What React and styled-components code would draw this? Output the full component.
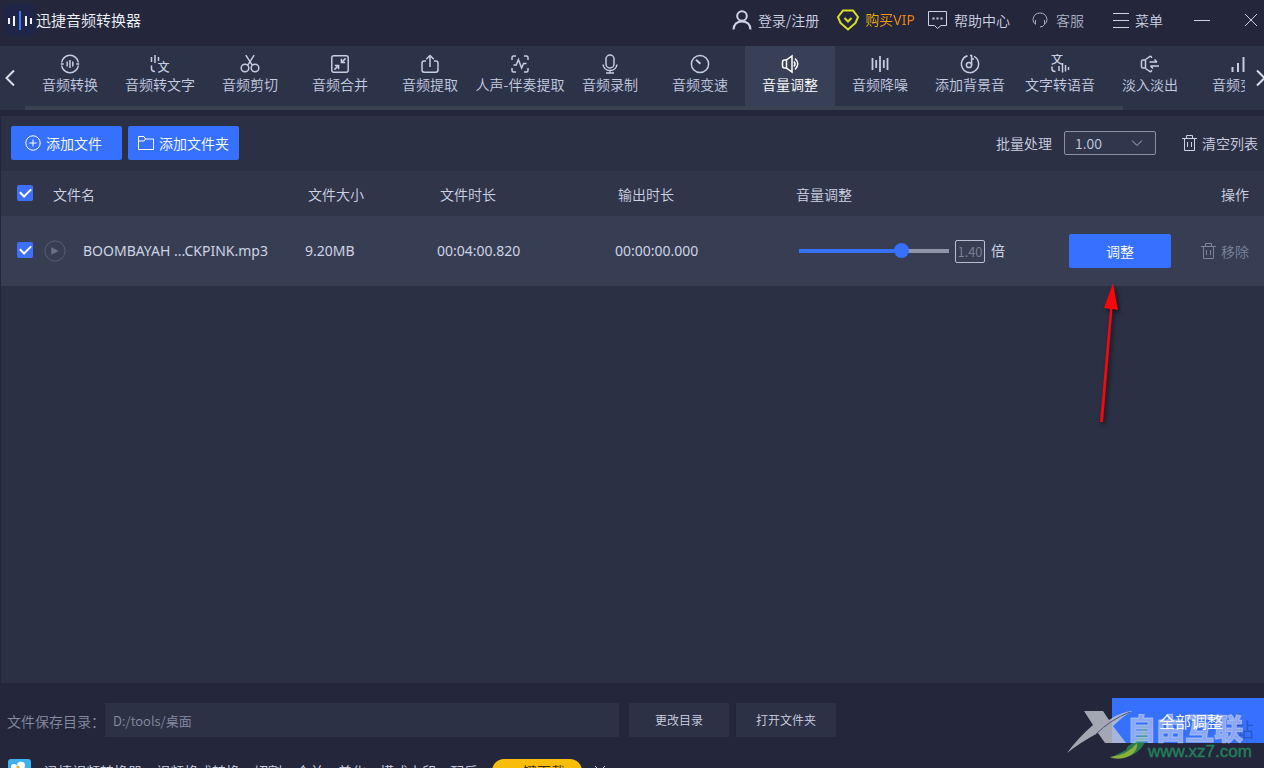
import React, { useState } from "react";
import styled, { createGlobalStyle } from "styled-components";

const tabs = [
  { name: "音频转换", icon: "convert" },
  { name: "音频转文字", icon: "toText" },
  { name: "音频剪切", icon: "cut" },
  { name: "音频合并", icon: "merge" },
  { name: "音频提取", icon: "extract" },
  { name: "人声-伴奏提取", icon: "vocal" },
  { name: "音频录制", icon: "record" },
  { name: "音频变速", icon: "speed" },
  { name: "音量调整", icon: "volume" },
  { name: "音频降噪", icon: "denoise" },
  { name: "添加背景音", icon: "music" },
  { name: "文字转语音", icon: "toSpeech" },
  { name: "淡入淡出", icon: "fade" },
  { name: "音频变声", icon: "signal" },
];

const files = [
  {
    name: "BOOMBAYAH ...CKPINK.mp3",
    size: "9.20MB",
    duration: "00:04:00.820",
    output: "00:00:00.000",
    volume: 1.4,
  },
];

const tabIcons = {
  convert: (
    <>
      <path d="M1.6 8.5A8.5 8.5 0 0 1 18.4 8.5M18.4 11.5A8.5 8.5 0 0 1 1.6 11.5" />
      <path d="M.8 10h3M16.2 10h3M7.2 7.5v5M10 6v8M12.8 7.5v5" />
    </>
  ),
  toText: (
    <>
      <path d="M1.5 3v5M5 1v8M8.5 3v4M1.5 11.5v3q0 3 3.5 3" />
      <text x="7.5" y="17.6">文</text>
    </>
  ),
  cut: (
    <>
      <circle cx="5" cy="14" r="3.8" />
      <circle cx="15" cy="14" r="3.8" />
      <path d="M5.8 1.2L12.4 11.4M14.2 1.2L7.6 11.4" />
    </>
  ),
  merge: (
    <>
      <rect x="1.8" y="1.8" width="16.4" height="16.4" rx="2" />
      <path d="M15.6 4.4L11.6 8.4M11.4 4.8v3.8h3.8M4.4 15.6L8.4 11.6M8.6 15.2v-3.8H4.8" />
    </>
  ),
  extract: (
    <>
      <path d="M6 7H4.2Q2 7 2 9.2V16q0 2.2 2.2 2.2h11.6Q18 18.2 18 16V9.2Q18 7 15.8 7H14" />
      <path d="M10 13V1.8M6.2 5.2L10 1.5L13.8 5.2" />
    </>
  ),
  vocal: (
    <>
      <path d="M2 6V3.5Q2 2 3.5 2H6M14 2h2.5Q18 2 18 3.5V6M18 14v2.5q0 1.5-1.5 1.5H14M6 18H3.5Q2 18 2 16.5V14" />
      <path d="M3.5 11H6.2L8.4 5.5L11.6 14L13.6 9.5H16.5" />
    </>
  ),
  record: (
    <>
      <rect x="6" y="1" width="8" height="13" rx="4" />
      <path d="M3 10.5q1 6 7 6t7-6M10 16.5V19M6 19h8" />
    </>
  ),
  speed: (
    <>
      <circle cx="10" cy="10" r="8.6" />
      <path d="M6 5.8L10.4 9.8" strokeWidth="2" />
    </>
  ),
  volume: (
    <>
      <path d="M6.5 6H4.5Q2.5 6 2.5 8v4q0 2 2 2h2M6.5 5.8V14.2L12 18V2L6.5 5.8Z" />
      <path d="M14 7.5q2 2.5 0 5M15 4.5q5.5 5.5 0 11" />
    </>
  ),
  denoise: (
    <path d="M2.5 4v12M6.2 6v8M10 2v16M13.8 6v8M17.5 4v12" strokeWidth="1.8" />
  ),
  music: (
    <>
      <path d="M7.5 1.8A8.6 8.6 0 1 0 14 2.4" />
      <circle cx="9" cy="11" r="2.6" />
      <path d="M11.6 11V1.5H10M11.6 5H14" />
    </>
  ),
  toSpeech: (
    <>
      <text x="1" y="10.4">文</text>
      <path d="M2 12.5V15q0 2.5 3.5 2.5M9 12v5M12.5 9v9.5M15.5 11v6.5M18.5 13v3" />
    </>
  ),
  fade: (
    <>
      <path d="M5.5 6H3Q1.5 6 1.5 7.5v5Q1.5 14 3 14h2.5M5.5 5.5v9M5.5 5.5L10 2.4Q11.5 1.8 11.5 4M5.5 14.5L10 17.6Q11.5 18.2 11.5 16" />
      <path d="M9.5 8H17M14.5 5.5L17 8M19 12H10.5M13 14.5L10.5 12" />
    </>
  ),
  signal: <path d="M2.5 13v5M8 9v9M13.5 3v15" strokeWidth="2" />,
};

function TrashIcon() {
  return (
    <LineIcon width="15" height="16" viewBox="0 0 15 16">
      <path d="M0 3.5h15M4.5 3.5V.5h6v3M2.5 3.5v12h10v-12M5.5 7v5M9.5 7v5" />
    </LineIcon>
  );
}

function Header() {
  return (
    <TitleBar>
      <Brand>
        <svg width="32" height="32" viewBox="0 0 32 32">
          <rect width="32" height="32" rx="6" fill="#1e2547" />
          <path
            d="M5 14v6M10 12v10M22 12v10M27 14v6"
            stroke="#f2f4fb"
            strokeWidth="2"
          />
          <path d="M16 7v19" stroke="#3f74f2" strokeWidth="2" />
        </svg>
        <AppName>迅捷音频转换器</AppName>
      </Brand>
      <HeaderButton>
        <LineIcon width="20" height="20" viewBox="0 0 20 20" $weight={2}>
          <circle cx="10" cy="6" r="4.8" />
          <path d="M1.5 19.5Q2 11.5 10 11.5T18.5 19.5" />
        </LineIcon>
        登录/注册
      </HeaderButton>
      <HeaderButton $before={18} $tone="vip">
        <LineIcon width="22" height="22" viewBox="0 0 22 22" $weight={2}>
          <path d="M6 1.5H16L21 8L18.5 14L11 20.5L3.5 14L1 8Z" />
          <path d="M7.5 9L11 12.5L14.5 9" />
        </LineIcon>
        <VipText>购买VIP</VipText>
      </HeaderButton>
      <HeaderButton $before={13}>
        <LineIcon width="20" height="20" viewBox="0 0 20 20">
          <path d="M.5 1.5h18v14h-5.5L9.5 18.5L6.5 15.5h-6Z" />
          <path d="M4.5 8.5h2M8.5 8.5h2M12.5 8.5h2" strokeWidth="2" />
        </LineIcon>
        帮助中心
      </HeaderButton>
      <HeaderButton $before={22} $tone="dim">
        <LineIcon width="16" height="18" viewBox="0 0 16 18">
          <path d="M3 12.5Q1 12 1 8.5Q2 2 8 2t7 6.5q0 3.5-2 4M3.5 9v4.5M12.5 9v4.5Q11.5 16 8 16" />
        </LineIcon>
        客服
      </HeaderButton>
      <HeaderButton $before={29}>
        <LineIcon width="16" height="16" viewBox="0 0 16 16">
          <path d="M0 1.5h16M0 8.5h16M0 15.5h16" />
        </LineIcon>
        菜单
      </HeaderButton>
      <HeaderButton $before={31} aria-label="最小化">
        <LineIcon width="16" height="16" viewBox="0 0 16 16">
          <path d="M0 8.5h16" />
        </LineIcon>
      </HeaderButton>
      <HeaderButton $before={34} aria-label="关闭">
        <LineIcon width="14" height="14" viewBox="0 0 14 14">
          <path d="M1 1L13 13M13 1L1 13" />
        </LineIcon>
      </HeaderButton>
    </TitleBar>
  );
}

function Tabs() {
  const [active, setActive] = useState("音量调整");

  return (
    <TabBar>
      <Arrow aria-label="向左">
        <svg width="10" height="18" viewBox="0 0 10 18">
          <path d="M9 1.5L1.5 9L9 16.5" />
        </svg>
      </Arrow>
      <TabViewport>
        <TabList>
          {tabs.map((tab) => (
            <Tab
              key={tab.name}
              $active={tab.name === active}
              onClick={() => setActive(tab.name)}
            >
              <TabIcon viewBox="0 0 20 20">{tabIcons[tab.icon]}</TabIcon>
              {tab.name}
            </Tab>
          ))}
        </TabList>
        <ScrollThumb />
      </TabViewport>
      <Arrow $end aria-label="向右">
        <svg width="8" height="18" viewBox="0 0 8 18">
          <path d="M1 1.5L8.5 9L1 16.5" />
        </svg>
      </Arrow>
    </TabBar>
  );
}

function Toolbar() {
  return (
    <Tools>
      <PrimaryButton $start={14}>
        <LineIcon width="16" height="16" viewBox="0 0 16 16">
          <circle cx="8" cy="8" r="7.2" />
          <path d="M8 4.5v7M4.5 8h7" />
        </LineIcon>
        添加文件
      </PrimaryButton>
      <PrimaryButton $start={10}>
        <LineIcon width="16" height="16" viewBox="0 0 16 16">
          <path d="M.5 14.5v-13h5.5l1.5 2.5h8v10.5ZM.5 6h5.5l1.5-2" />
        </LineIcon>
        添加文件夹
      </PrimaryButton>
      <Batch>
        <label htmlFor="batch">批量处理</label>
        <SelectBox>
          <Select id="batch" defaultValue="1.00">
            <option>0.50</option>
            <option>1.00</option>
            <option>1.50</option>
            <option>2.00</option>
          </Select>
          <Chevron width="12" height="8" viewBox="0 0 12 8">
            <path d="M1 1.5L6 6.5L11 1.5" />
          </Chevron>
        </SelectBox>
      </Batch>
      <TextButton>
        <TrashIcon />
        清空列表
      </TextButton>
    </Tools>
  );
}

function FileRow({ file }) {
  const [volume, setVolume] = useState(file.volume);

  return (
    <Row>
      <CheckCell>
        <Checkbox defaultChecked aria-label={file.name} />
      </CheckCell>
      <Cell>
        <Line $gap={17}>
          <PlayButton aria-label="播放">
            <svg width="24" height="24" viewBox="0 0 24 24">
              <circle cx="12" cy="12" r="11" fill="none" stroke="#596177" />
              <path d="M8 8v8l8-4Z" fill="#697187" />
            </svg>
          </PlayButton>
          {file.name}
        </Line>
      </Cell>
      <Cell>{file.size}</Cell>
      <Cell>{file.duration}</Cell>
      <Cell>{file.output}</Cell>
      <Cell>
        <Line $gap={6} $start={6}>
          <Slider
            aria-label="音量调整"
            min="0"
            max="2"
            step="0.01"
            value={volume}
            onChange={(event) => setVolume(Number(event.target.value))}
            style={{ "--fill": `${(volume / 2) * 100}%` }}
          />
          <VolumeInput aria-label="倍数" readOnly value={volume.toFixed(2)} />
          倍
        </Line>
      </Cell>
      <Cell>
        <Line $gap={30} $end>
          <AdjustButton>调整</AdjustButton>
          <TextButton $dim>
            <TrashIcon />
            移除
          </TextButton>
        </Line>
      </Cell>
    </Row>
  );
}

function FileTable() {
  return (
    <Table>
      <colgroup>
        <Col $width={43} />
        <Col />
        <Col $width={132} />
        <Col $width={178} />
        <Col $width={178} />
        <Col $width={262} />
        <Col $width={209} />
      </colgroup>
      <thead>
        <tr>
          <CheckHead>
            <Checkbox defaultChecked aria-label="全选" />
          </CheckHead>
          <Head $start={9}>文件名</Head>
          <Head>文件大小</Head>
          <Head>文件时长</Head>
          <Head>输出时长</Head>
          <Head>音量调整</Head>
          <Head $end>操作</Head>
        </tr>
      </thead>
      <tbody>
        {files.map((file) => (
          <FileRow key={file.name} file={file} />
        ))}
      </tbody>
    </Table>
  );
}

function Footer() {
  return (
    <Bottom>
      <SaveRow>
        <SaveLabel htmlFor="path">文件保存目录：</SaveLabel>
        <PathInput id="path" defaultValue="D:/tools/桌面" />
        <PlainButton>更改目录</PlainButton>
        <PlainButton>打开文件夹</PlainButton>
        <SubmitButton>
          <SubmitText>全部调整</SubmitText>
        </SubmitButton>
      </SaveRow>
      <Promo>
        <svg width="23" height="24" viewBox="0 0 23 24">
          <rect width="23" height="24" rx="3" fill="#3fb2ee" />
          <circle cx="6" cy="8" r="3" fill="#fff" />
          <circle cx="13" cy="6.5" r="4" fill="#fff" />
          <circle cx="10" cy="8" r="1.5" fill="#f3ad1d" />
          <rect x="4" y="9" width="14" height="10" rx="2" fill="#fff" />
        </svg>
        <PromoText>
          迅捷视频转换器：视频格式转换、切割、合并、美化、模式水印、配乐
        </PromoText>
        <DownloadButton>一键下载</DownloadButton>
        <PromoClose aria-label="关闭推广">
          <LineIcon width="10" height="10" viewBox="0 0 10 10">
            <path d="M0 0L10 10M10 0L0 10" />
          </LineIcon>
        </PromoClose>
      </Promo>
    </Bottom>
  );
}

function Watermark() {
  return (
    <Mark>
      <MarkLogo width="98" height="60" viewBox="0 0 98 60">
        <path
          d="M62 46Q74 40 78 22Q86 40 71 52Q60 60 44 58L60 50Z"
          fill="#2f9e55"
          opacity=".7"
        />
        <path
          d="M44 57Q62 55 71 43Q72 54 58 58Q51 60 44 57Z"
          fill="#b0c832"
          opacity=".7"
        />
        <path
          d="M18 11H37L43 20Q51 14 64 11H66Q56 17 47 26L60 43H39L32 33Q15 42 1 53Q12 38 27 25Z"
          fill="#c3c7d2"
          opacity=".8"
        />
        <path d="M64 12Q44 20 30 34" fill="none" stroke="#4a5474" />
      </MarkLogo>
      <MarkShade>站</MarkShade>
      <MarkName>自由互联</MarkName>
      <MarkUrl>www.xz7.com</MarkUrl>
    </Mark>
  );
}

export default function App() {
  return (
    <Page>
      <GlobalStyle />
      <Header />
      <Tabs />
      <Main>
        <Toolbar />
        <FileTable />
      </Main>
      <Footer />
      <Pointer width="30" height="150" viewBox="0 0 30 150">
        <path d="M7 143L17 30L11 29L20 4L25 31L19.5 30L10 143Z" />
      </Pointer>
      <Watermark />
    </Page>
  );
}

const GlobalStyle = createGlobalStyle`
  * {
    box-sizing: border-box;
  }
  body {
    margin: 0;
    background: #24273b;
  }
  body, button, input, select {
    font-family: "Noto Sans CJK SC", sans-serif;
    font-size: 14px;
    font-weight: 350;
    line-height: 20px;
  }
  button {
    padding: 0;
    border: none;
    background: none;
    color: inherit;
    cursor: pointer;
    white-space: nowrap;
  }
`;

const Page = styled.div`
  position: relative;
  display: flex;
  flex-direction: column;
  height: 100vh;
  overflow: hidden;
  background: #24273b;
  color: #ced3e4;
`;

const LineIcon = styled.svg`
  flex: none;
  fill: none;
  stroke: currentColor;
  stroke-width: ${(props) => props.$weight || 1};
`;

const TitleBar = styled.header`
  display: flex;
  align-items: center;
  height: 46px;
  padding: 0 6px 6px 4px;
`;

const Brand = styled.div`
  display: flex;
  align-items: center;
  margin-right: auto;
`;

const AppName = styled.span`
  font-size: 15px;
  color: #f2f4fb;
`;

const tones = { vip: "#d9e021", dim: "#a9afc2" };

const HeaderButton = styled.button`
  display: flex;
  align-items: center;
  gap: ${(props) => (props.$tone === "dim" ? 8 : 6)}px;
  margin-left: ${(props) => props.$before || 0}px;
  color: ${(props) => tones[props.$tone] || "#ced3e4"};
`;

const VipText = styled.span`
  font-family: "Noto Sans", "Noto Sans CJK SC", sans-serif;
  font-weight: 400;
  background: linear-gradient(90deg, #f0b40c, #f5761c);
  background-clip: text;
  color: transparent;
`;

const TabBar = styled.nav`
  display: flex;
  height: 64px;
  background: #2c3348;
`;

const TabViewport = styled.div`
  flex: 1;
  min-width: 0;
  overflow: hidden;
`;

const TabList = styled.div`
  display: flex;
  height: 60px;
`;

const Tab = styled.button`
  flex: none;
  display: flex;
  flex-direction: column;
  align-items: center;
  width: 90px;
  padding-top: 8px;
  background: ${(props) => (props.$active ? "#384058" : "transparent")};
  color: ${(props) => (props.$active ? "#ffffff" : "#c6cce2")};
`;

const TabIcon = styled.svg`
  width: 20px;
  height: 20px;
  fill: none;
  stroke: currentColor;
  stroke-width: 1.5;
  text {
    fill: currentColor;
    stroke: none;
    font-size: 12px;
    font-weight: 500;
  }
`;

const ScrollThumb = styled.div`
  width: 90%;
  height: 4px;
  background: #3b4053;
`;

const Arrow = styled.button`
  display: flex;
  align-items: center;
  justify-content: ${(props) => (props.$end ? "flex-end" : "flex-start")};
  width: ${(props) => (props.$end ? 19 : 25)}px;
  padding-left: ${(props) => (props.$end ? 0 : 5)}px;
  svg {
    fill: none;
    stroke: #d9ddeb;
    stroke-width: 2;
  }
`;

const Main = styled.main`
  flex: 1;
  min-height: 0;
  margin: 6px 0 0 1px;
  background: #2c3044;
`;

const Tools = styled.div`
  display: flex;
  align-items: center;
  gap: 6px;
  height: 55px;
  padding: 0 6px 2px 10px;
`;

const PrimaryButton = styled.button`
  display: flex;
  align-items: center;
  gap: 5px;
  width: 111px;
  height: 34px;
  padding-left: ${(props) => props.$start}px;
  border-radius: 2px;
  background: #3670ff;
  color: #ffffff;
`;

const Batch = styled.div`
  display: flex;
  align-items: center;
  gap: 12px;
  margin-left: auto;
  margin-right: 20px;
`;

const SelectBox = styled.div`
  position: relative;
`;

const Select = styled.select`
  display: block;
  appearance: none;
  width: 92px;
  height: 24px;
  padding: 0 10px;
  border: 1px solid #8b91a5;
  border-radius: 2px;
  background: #30364b;
  color: #c5cadb;
`;

const Chevron = styled.svg`
  position: absolute;
  top: 8px;
  right: 13px;
  fill: none;
  stroke: #aeb4c6;
  pointer-events: none;
`;

const TextButton = styled.button`
  display: flex;
  align-items: center;
  gap: 5px;
  color: ${(props) => (props.$dim ? "#7d859a" : "#ced3e4")};
`;

const Table = styled.table`
  width: 100%;
  table-layout: fixed;
  border-collapse: collapse;
`;

const Col = styled.col`
  width: ${(props) => (props.$width ? `${props.$width}px` : "auto")};
`;

const Head = styled.th`
  height: 45px;
  padding: 0 15px 0 ${(props) => props.$start || 3}px;
  background: #30354a;
  font-weight: inherit;
  text-align: ${(props) => (props.$end ? "right" : "left")};
`;

const CheckHead = styled(Head)`
  padding: 0 0 2px 16px;
`;

const Row = styled.tr`
  background: #373e54;
`;

const Cell = styled.td`
  height: 70px;
  padding: 0;
  font-family: "Noto Sans", "Noto Sans CJK SC", sans-serif;
  font-weight: 400;
  white-space: nowrap;
`;

const CheckCell = styled(Cell)`
  padding: 0 0 2px 16px;
`;

const Line = styled.div`
  display: flex;
  align-items: center;
  justify-content: ${(props) => (props.$end ? "flex-end" : "flex-start")};
  gap: ${(props) => props.$gap}px;
  padding-left: ${(props) => props.$start || 0}px;
  padding-right: ${(props) => (props.$end ? 15 : 0)}px;
`;

const Checkbox = styled.input.attrs({ type: "checkbox" })`
  display: grid;
  place-items: center;
  appearance: none;
  width: 16px;
  height: 16px;
  margin: 0;
  border-radius: 2px;
  background: #3f70fb;
  &:checked::after {
    content: "";
    width: 9px;
    height: 5px;
    margin-bottom: 3px;
    border: solid #ffffff;
    border-width: 0 0 2px 2px;
    transform: rotate(-45deg);
  }
`;

const PlayButton = styled.button`
  display: flex;
  width: 22px;
  height: 24px;
`;

const Slider = styled.input.attrs({ type: "range" })`
  appearance: none;
  width: 150px;
  height: 16px;
  margin: 0;
  background: transparent;
  &::-webkit-slider-runnable-track {
    height: 4px;
    background: linear-gradient(
      90deg,
      #3670ff var(--fill),
      #8f96aa var(--fill)
    );
  }
  &::-webkit-slider-thumb {
    appearance: none;
    width: 15px;
    height: 15px;
    margin-top: -6px;
    border-radius: 50%;
    background: #3670ff;
  }
`;

const VolumeInput = styled.input`
  width: 30px;
  height: 23px;
  padding: 0;
  border: 1px solid #b9bfd2;
  border-radius: 2px;
  background: transparent;
  color: #7d859a;
  font-size: 13px;
  text-align: center;
`;

const AdjustButton = styled.button`
  width: 102px;
  height: 34px;
  border-radius: 2px;
  background: #3670ff;
  color: #ffffff;
`;

const Bottom = styled.footer`
  flex: none;
  padding: 15px 0 0 7px;
`;

const SaveRow = styled.div`
  display: flex;
  align-items: flex-start;
  height: 45px;
`;

const SaveLabel = styled.label`
  flex: none;
  align-self: center;
  color: #868ca1;
`;

const PathInput = styled.input`
  flex: 0 1 514px;
  min-width: 0;
  height: 34px;
  margin: 5px 3px 0 0;
  padding: 0 8px;
  border: none;
  background: #2c3145;
  color: #868ca1;
  font-size: 13px;
`;

const PlainButton = styled.button`
  flex: none;
  width: 100px;
  height: 34px;
  margin: 5px 0 0 7px;
  background: #2c3145;
  color: #ced3e4;
  font-size: 12px;
`;

const SubmitButton = styled.button`
  flex: none;
  width: 152px;
  height: 45px;
  margin-left: auto;
  padding-left: 6px;
  background: #3670ff;
  color: #ffffff;
  font-size: 16px;
`;

/* Stays readable above the watermark. */
const SubmitText = styled.span`
  position: relative;
  z-index: 1;
`;

/* The promo strip runs past the bottom edge of the window. */
const Promo = styled.div`
  display: flex;
  align-items: center;
  height: 24px;
  margin: 16px 0 -15px 1px;
`;

const PromoText = styled.span`
  margin: 0 14px 0 13px;
  white-space: nowrap;
`;

const DownloadButton = styled.button`
  width: 90px;
  height: 24px;
  border-radius: 12px;
  background: #f8bd0b;
  color: #3d2c0a;
`;

const PromoClose = styled.button`
  display: flex;
  margin-left: 13px;
`;

const Pointer = styled.svg`
  position: absolute;
  top: 279px;
  right: 141px;
  fill: #f5070b;
  filter: drop-shadow(2px 2px 2px rgba(0, 0, 0, 0.6));
  pointer-events: none;
`;

const Mark = styled.div`
  position: absolute;
  right: 0;
  bottom: 0;
  width: 198px;
  height: 68px;
  pointer-events: none;
`;

const MarkLogo = styled.svg`
  position: absolute;
  left: 0;
  top: 0;
`;

const MarkShade = styled.span`
  position: absolute;
  left: 168px;
  top: 20px;
  font-size: 20px;
  line-height: 20px;
  color: rgba(22, 60, 130, 0.5);
`;

const MarkName = styled.span`
  position: absolute;
  left: 61px;
  top: 12px;
  font-size: 29px;
  line-height: 30px;
  font-weight: 900;
  color: rgba(190, 204, 240, 0.65);
  -webkit-text-stroke: 1px rgba(190, 204, 240, 0.65);
  white-space: nowrap;
`;

const MarkUrl = styled.span`
  position: absolute;
  left: 82px;
  top: 42px;
  font-family: "Liberation Sans", sans-serif;
  font-size: 17px;
  line-height: 20px;
  color: #23805c;
  -webkit-text-stroke: 1px rgba(35, 128, 92, 0.4);
`;
